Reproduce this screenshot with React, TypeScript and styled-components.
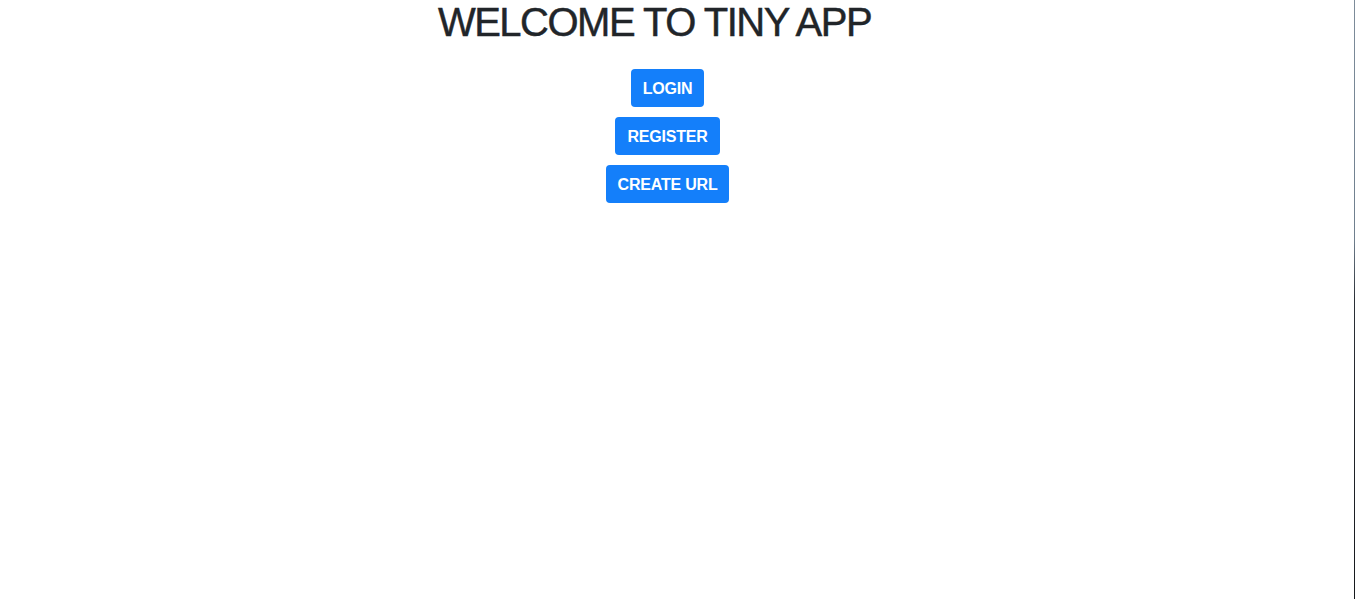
import React from "react";
import styled, { createGlobalStyle } from "styled-components";

const GlobalStyle = createGlobalStyle`
  html, body {
    margin: 0;
    padding: 0;
    background: #ffffff;
  }
  body {
    font-family: "Liberation Sans", Arial, Helvetica, sans-serif;
    color: #212529;
  }
`;

const Page = styled.div`
  display: flex;
  min-height: 599px;
  width: 1355px;
`;

const Main = styled.main`
  flex: 1;
  display: flex;
  flex-direction: column;
  align-items: center;
  padding-right: 19px;
`;

const Edge = styled.div`
  width: 1px;
  flex: none;
  background: linear-gradient(
    to bottom,
    #7d8c9a 0%,
    #6f7f8e 40%,
    #2a2f36 50%,
    #15181c 100%
  );
`;

const Title = styled.h1`
  margin: 0 0 25px;
  padding-right: 26px;
  font-size: 40px;
  line-height: 44px;
  font-weight: 400;
  letter-spacing: -1.5px;
  color: #212529;
  -webkit-text-stroke: 0.45px #212529;
  white-space: nowrap;
`;

const ButtonStack = styled.nav`
  display: flex;
  flex-direction: column;
  align-items: center;
  gap: 10px;
`;

const Button = styled.a`
  display: inline-flex;
  align-items: center;
  justify-content: center;
  height: 38px;
  box-sizing: border-box;
  padding: 1px 12px 0;
  border-radius: 4px;
  background: #147ffa;
  color: #ffffff;
  font-size: 16px;
  font-weight: 700;
  letter-spacing: -0.2px;
  text-decoration: none;
  cursor: pointer;
  white-space: nowrap;
`;

export default function App() {
  return (
    <>
      <GlobalStyle />
      <Page>
        <Main>
          <Title>WELCOME TO TINY APP</Title>
          <ButtonStack>
            <Button href="#">LOGIN</Button>
            <Button href="#">REGISTER</Button>
            <Button href="#">CREATE URL</Button>
          </ButtonStack>
        </Main>
        <Edge />
      </Page>
    </>
  );
}
